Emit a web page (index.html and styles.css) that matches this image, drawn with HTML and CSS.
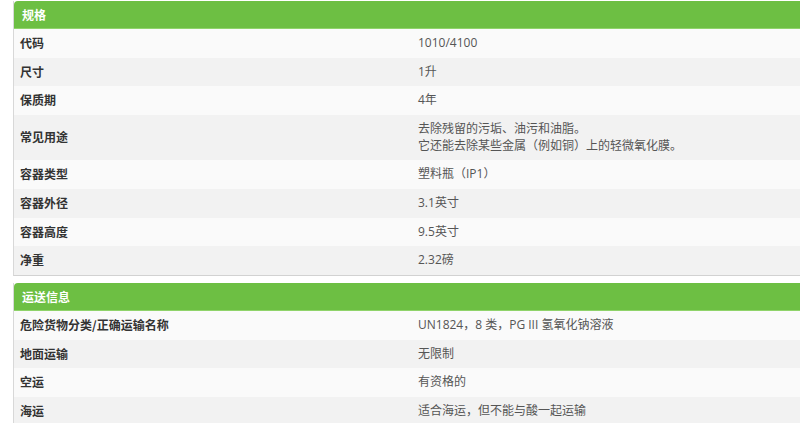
FILE: index.html
```html
<!DOCTYPE html>
<html lang="zh-CN">
<head>
  <meta charset="UTF-8">
  <title>规格</title>
  <link rel="stylesheet" href="styles.css">
</head>
<body>
<div class="page">
  <table class="spec-table">
    <thead>
      <tr><th colspan="2">规格</th></tr>
    </thead>
    <tbody>
      <tr><td class="label">代码</td><td class="value">1010/4100</td></tr>
      <tr><td class="label">尺寸</td><td class="value">1升</td></tr>
      <tr><td class="label">保质期</td><td class="value">4年</td></tr>
      <tr><td class="label">常见用途</td><td class="value">去除残留的污垢、油污和油脂。<br>它还能去除某些金属（例如铜）上的轻微氧化膜。</td></tr>
      <tr><td class="label">容器类型</td><td class="value">塑料瓶（IP1）</td></tr>
      <tr><td class="label">容器外径</td><td class="value">3.1英寸</td></tr>
      <tr><td class="label">容器高度</td><td class="value">9.5英寸</td></tr>
      <tr><td class="label">净重</td><td class="value">2.32磅</td></tr>
    </tbody>
  </table>

  <table class="spec-table">
    <thead>
      <tr><th colspan="2">运送信息</th></tr>
    </thead>
    <tbody>
      <tr><td class="label">危险货物分类/正确运输名称</td><td class="value">UN1824，8 类，PG III 氢氧化钠溶液</td></tr>
      <tr><td class="label">地面运输</td><td class="value">无限制</td></tr>
      <tr><td class="label">空运</td><td class="value">有资格的</td></tr>
      <tr><td class="label">海运</td><td class="value">适合海运，但不能与酸一起运输</td></tr>
    </tbody>
  </table>
</div>
</body>
</html>
```

FILE: styles.css
```css
body {
  margin: 0;
  padding: 0;
  background: #fff;
  font-family: 'Open Sans', 'Noto Sans CJK SC', sans-serif;
}
.page {
  padding: 1px 0 0 13px;
}
.spec-table {
  width: 100%;
  border-collapse: separate;
  border-spacing: 0;
  border-left: 1px solid #d8d8d8;
  border-bottom: 1px solid #d2d2d2;
  margin-bottom: 7px;
}
.spec-table th {
  background: #6dbf43;
  color: #fff;
  font-family: 'Noto Sans CJK SC', sans-serif;
  font-size: 12px;
  font-weight: bold;
  text-align: left;
  padding: 5px 8px;
  line-height: 17px;
  border-top-left-radius: 4px;
  border-bottom: 1px solid #8fd36a;
}
.spec-table td {
  padding: 6px 6px;
  line-height: 16.67px;
  font-size: 12px;
  vertical-align: middle;
}
.spec-table tbody tr:nth-child(odd) {
  background: #fafafa;
}
.spec-table tbody tr:nth-child(even) {
  background: #f2f2f2;
}
.label {
  width: 386px;
  color: #333;
  font-family: 'Noto Sans CJK SC', sans-serif;
  font-weight: bold;
}
.value {
  color: #555;
  padding-left: 5px;
}
```
